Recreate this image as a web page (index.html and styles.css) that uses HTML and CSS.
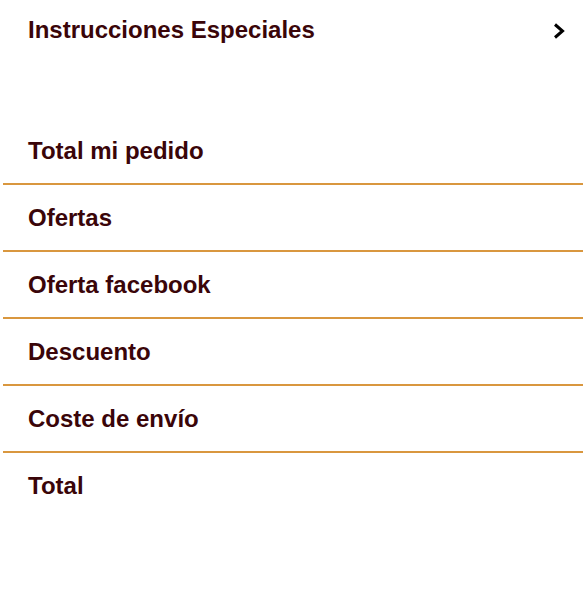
FILE: index.html
```html
<!DOCTYPE html>
<html lang="es">
<head>
<meta charset="utf-8">
<link rel="stylesheet" href="styles.css">
</head>
<body>
<div class="page">
  <div class="special">
    <span class="label">Instrucciones Especiales</span>
    <svg class="chev" width="14" height="18" viewBox="0 0 14 18"><path d="M3 2.5 L10.5 9 L3 15.5" fill="none" stroke="#000" stroke-width="3"/></svg>
  </div>
  <div class="summary">
    <div class="row"><span class="label">Total mi pedido</span></div>
    <div class="row"><span class="label">Ofertas</span></div>
    <div class="row"><span class="label">Oferta facebook</span></div>
    <div class="row"><span class="label">Descuento</span></div>
    <div class="row"><span class="label">Coste de envío</span></div>
    <div class="row last"><span class="label">Total</span></div>
  </div>
</div>
</body>
</html>
```
FILE: styles.css
```css
html, body { margin: 0; padding: 0; background: #fff; }
.page { width: 586px; height: 596px; font-family: "Liberation Sans", Arial, sans-serif; }
.label { font-size: 24px; font-weight: bold; color: #3a0509; }
.special { height: 60px; display: flex; align-items: center; justify-content: space-between; padding: 0 20px 0 28px; }
.chev { display: block; margin-top: 1px; }
.summary { margin: 58px 3px 0 3px; }
.row { height: 65px; display: flex; align-items: center; padding-left: 25px; border-bottom: 2px solid #d9973f; }
.row.last { border-bottom: none; }
```
